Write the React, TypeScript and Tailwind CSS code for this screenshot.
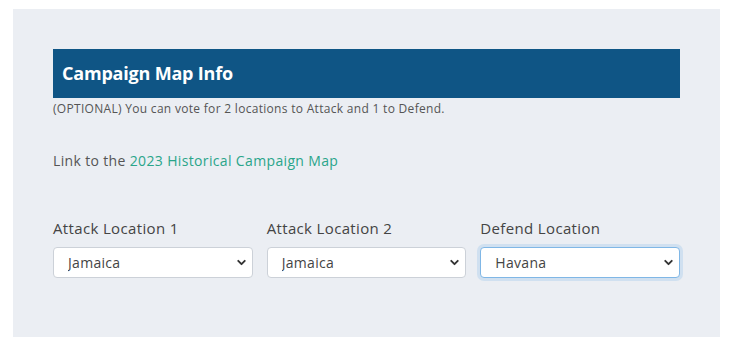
import { ChevronDown } from "lucide-react";

const fields = [
  { label: "Attack Location 1", value: "Jamaica", focused: false },
  { label: "Attack Location 2", value: "Jamaica", focused: false },
  { label: "Defend Location", value: "Havana", focused: true },
];

const options = ["Jamaica", "Havana", "Nassau", "Tortuga", "Port Royal"];

export default function App() {
  return (
    <div className="min-h-[341px] bg-white pt-[9px] pl-[13px] font-['Open_Sans',sans-serif]">
      <div className="w-[707px] h-[328px] bg-[#ebeef3] px-10 pt-10">
        <div className="h-[49px] bg-[#0f5585] flex items-center px-[9px]">
          <h2 className="text-white text-[18px] font-bold tracking-[-0.2px]">Campaign Map Info</h2>
        </div>
        <p className="text-[12px] tracking-[0.3px] text-[#555] mt-[3px] leading-[16px]">
          (OPTIONAL) You can vote for 2 locations to Attack and 1 to Defend.
        </p>
        <p className="text-[14px] tracking-[0.35px] text-[#555] mt-[34px] leading-[20px]">
          Link to the{" "}
          <a href="#" className="text-[#2aa58a]">
            2023 Historical Campaign Map
          </a>
        </p>
        <div className="grid grid-cols-3 gap-[14px] mt-[47px]">
          {fields.map((f) => (
            <div key={f.label}>
              <label className="block text-[15px] tracking-[0.35px] text-[#444] leading-[20px] mb-[9px]">{f.label}</label>
              <div className="relative">
                <select
                  defaultValue={f.value}
                  className={
                    f.focused
                      ? "w-full h-[31px] appearance-none bg-white rounded-[4px] border border-[#80b7e6] shadow-[0_0_0_3px_rgba(128,183,230,0.25)] pl-[14px] text-[14px] tracking-[0.3px] text-[#444] outline-none"
                      : "w-full h-[31px] appearance-none bg-white rounded-[4px] border border-[#ccd1d8] pl-[14px] text-[14px] tracking-[0.3px] text-[#444] outline-none"
                  }
                >
                  {options.map((o) => (
                    <option key={o}>{o}</option>
                  ))}
                </select>
                <ChevronDown
                  size={13}
                  strokeWidth={3.5}
                  className="absolute right-[5px] top-[9px] text-[#333] pointer-events-none"
                />
              </div>
            </div>
          ))}
        </div>
      </div>
    </div>
  );
}
